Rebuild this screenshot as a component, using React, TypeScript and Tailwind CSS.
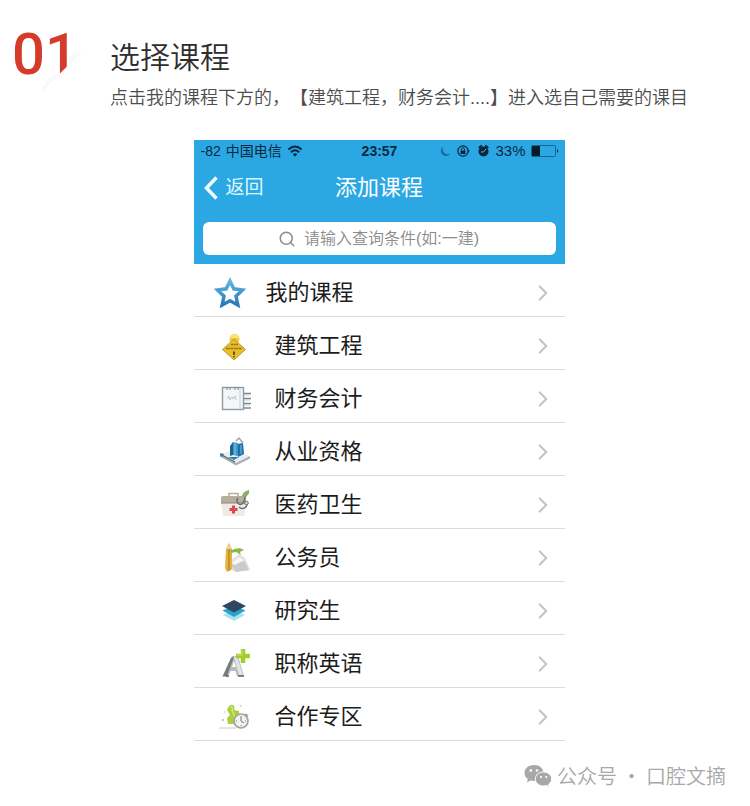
import type { ReactNode } from "react";
import clsx from "clsx";
import { ChevronRight, Search } from "lucide-react";

const StarIcon = () => (
  <svg viewBox="0 0 34 34" className="h-[34px] w-[34px]" aria-hidden="true">
    <defs>
      <linearGradient id="star" x1="0" y1="0" x2="0" y2="1">
        <stop offset="0" stopColor="#5fb4e2" />
        <stop offset="1" stopColor="#2b78b8" />
      </linearGradient>
    </defs>
    <path
      d="M17 5 20.800 12.800 29.500 14 23 20.200 24.800 29 17 24.800 9.200 29 11 20.200 4.500 14 13.200 12.800Z"
      fill="#fff"
      stroke="url(#star)"
      strokeWidth="3.500"
    />
  </svg>
);

const icons = {
  construction: (
    <>
      <circle cx="16.500" cy="9" r="5" fill="#f0c93c" />
      <path d="M12 8c1-5 8-5 9 0" fill="#fbe27a" />
      <path d="M16 9 27.500 19.500 16 30 4.500 19.500Z" fill="#e8bd25" stroke="#b48d1e" strokeWidth=".8" />
      <path d="M13 14.500h7M8 18.500h16" stroke="#8a6f22" strokeWidth="1.400" strokeDasharray="2 .6" />
      <path d="M16 21.500v3.500M16 26.200v1.300" stroke="#4d3b10" strokeWidth="1.600" />
    </>
  ),
  finance: (
    <>
      <path d="M24 10.500h9M24 15.500h9M24 20.500h9M24 25h9" stroke="#7d8990" strokeWidth="1.600" />
      <path d="M26 12h6M26 17h6M26 22h6" stroke="#c5cbd0" />
      <rect x="4.500" y="4.500" width="21" height="22" fill="#f3f7f9" stroke="#8d9aa2" strokeWidth="1.400" />
      <path d="M22 5v21" stroke="#c4d0d6" />
      <path d="M9 4v3M12 5v2M17 4v3M20 5v2" stroke="#7d8990" />
      <path d="m9 16 2-3 1 4 2-3 1 2 2-3 1 4" fill="none" stroke="#b9c3c9" />
    </>
  ),
  career: (
    <>
      <path d="M2 18 16 14l16 6-14 9z" fill="#e9edf0" />
      <path d="M2 18v2.500L18 29.500 32 22.500V20L18 27z" fill="#a7b1ba" />
      <path d="M2 18 17 26" stroke="#596a78" strokeWidth="1.200" />
      <circle cx="4" cy="19" r="1.800" fill="#4b7594" />
      <path d="m12 10 3-4v13l-3 1z" fill="#1e608e" />
      <path d="m15 6 5 1v13l-5-1z" fill="#3f98cb" />
      <path d="m20 8 5-1 1 11-6 3z" fill="#1d6fa8" />
      <path d="M17 7v12M23 9v9" stroke="#7fc4e6" />
      <path d="m18 5 3-3 4 5" fill="none" stroke="#9aa5ad" strokeWidth="1.500" />
      <path d="M10 21h11l-5 3z" fill="#3a7aa5" />
    </>
  ),
  medical: (
    <>
      <path d="M11 8V4.500h9V8" fill="none" stroke="#b8ab99" strokeWidth="1.500" />
      <rect x="3" y="7" width="25" height="9" rx="2" fill="#b7ac9d" />
      <path d="M3.500 14H27.500L26.500 27H5z" fill="#f0eae6" />
      <path d="M3 14h25" stroke="#8f8374" />
      <path d="M15.500 16.500v8M11.500 20.500h8" stroke="#db4a4b" strokeWidth="3" />
      <path d="M20 9c-3 4 2 9 5 5s1-6 3-7M21 18c3 3 8 1 8-3" fill="none" stroke="#68716f" strokeWidth="1.400" />
      <circle cx="28.500" cy="14" r="1.800" fill="#d3d8d7" stroke="#68716f" />
      <path d="M24 7c1-4 4-5 7-6 1 4-2 7-6 7z" fill="#8dad67" />
    </>
  ),
  civil: (
    <>
      <path d="M11 20 21 12l6 4 5 12-14 2-8-3z" fill="#e0e1e3" />
      <path d="m13 23 13-4 5 9-13 2z" fill="#c9cbce" />
      <path d="m14 21 7-6 5 3-9 5z" fill="#f7f7f8" />
      <path d="M8 7 11 1l3 6v20l-5 3-2-4z" fill="#e4b441" />
      <path d="M11 2v27" stroke="#bd872a" strokeWidth="1.500" />
      <path d="m8 7 3-6 3 6z" fill="#e9d1a0" />
      <path d="M12 9c5-3 10-4 14-1l-4 2 1 3-5-3-5 1z" fill="#8aba4a" />
    </>
  ),
  graduate: (
    <>
      <path d="m5 20 11-5 11 5-11 6z" fill="#a9e2ef" />
      <path d="m4.500 15.500 11.500-5 11.500 5L16 22z" fill="#25a5ce" />
      <path d="M4 11 16 5l12 6-12 6.500z" fill="#304760" />
    </>
  ),
  english: (
    <>
      <path d="M4 29 14 8h6l6 20h-7l-1.500-5h-5L10 29z" fill="#b8babd" />
      <path d="M5 28 13 10l3-1-7 19z" fill="#77797d" />
      <path d="m16 9 3-.5L25 27h-4z" fill="#e3e4e6" />
      <path d="m14 19 2-6 2 6z" fill="#fff" />
      <path d="M8 28h3M20 28h6" stroke="#606166" strokeWidth="1.500" />
      <path d="M25 1v14M18 8h14" stroke="#a5cb2c" strokeWidth="4.500" />
      <path d="M24 2v5h-5" fill="none" stroke="#cbe46c" />
    </>
  ),
  partner: (
    <>
      <path d="M1 27h17" stroke="#dadcd9" strokeWidth="1.500" />
      <path d="M11 5c3-3 7 0 5 4l5 1 1 8-5 5h-7l-1-6 3-3-3-5z" fill="#a9cf3b" />
      <path d="M12 6c2-1 3 1 2 3l3 7" fill="none" stroke="#cfe781" strokeWidth="1.500" />
      <circle cx="5" cy="19" r="1" fill="#b4bc9b" />
      <circle cx="23" cy="5" r="1" fill="#d1dba6" />
      <circle cx="7" cy="11" r=".7" fill="#b4bc9b" />
      <circle cx="23" cy="20" r="7" fill="#f2f2ef" stroke="#a2a49f" strokeWidth="1.700" />
      <path d="M23 15v5l3 2M18 20h1M27 20h1M23 24v1" fill="none" stroke="#74766f" />
      <path d="m27 13 3 2" stroke="#a2a49f" strokeWidth="2" />
    </>
  ),
};

const courses: { name: string; icon: ReactNode }[] = [
  { name: "建筑工程", icon: icons.construction },
  { name: "财务会计", icon: icons.finance },
  { name: "从业资格", icon: icons.career },
  { name: "医药卫生", icon: icons.medical },
  { name: "公务员", icon: icons.civil },
  { name: "研究生", icon: icons.graduate },
  { name: "职称英语", icon: icons.english },
  { name: "合作专区", icon: icons.partner },
];

function CourseRow({ name, icon, featured }: { name: string; icon: ReactNode; featured?: boolean }) {
  return (
    <li className="border-b border-[#dcdcdc]">
      <a
        href="#"
        className={clsx(
          "flex h-[52px] items-center pt-[6px] pr-[9px]",
          featured ? "gap-[19px] pl-[19px]" : "gap-[21px] pl-6",
        )}
      >
        {icon}
        <span className="flex-1 text-[22px] leading-8 text-[#1c1c1c]">{name}</span>
        <ChevronRight className="h-[26px] w-[26px] text-[#c4c4c4]" strokeWidth={2} aria-hidden="true" />
      </a>
    </li>
  );
}

function StatusBar() {
  return (
    <div className="grid h-[22px] grid-cols-[1fr_auto_1fr] items-center pr-[6px] pl-[7px] text-sm leading-5 text-[#07283f]">
      <div className="flex items-center gap-[5px]">
        <span>-82</span>
        <span>中国电信</span>
        <svg viewBox="0 0 16 12" className="h-3 w-4" fill="none" stroke="currentColor" strokeWidth="2" aria-hidden="true">
          <path d="M1.500 4.500c4-4 9-4 13 0M4 7.200c2.500-2.500 5.500-2.500 8 0" />
          <path d="m5.800 9.200 2.200 2.500 2.200-2.500c-1.400-1.200-3-1.200-4.400 0z" fill="currentColor" stroke="none" />
        </svg>
      </div>
      <span className="font-bold">23:57</span>
      <div className="flex items-center justify-end gap-[5px]">
        <svg viewBox="0 0 50 14" className="h-[14px] w-[50px]" fill="none" aria-hidden="true">
          <path d="M3.500 2.500c-2.500 5 2 9.500 7 7-2 3.500-8 3.500-9.500-1C.2 6 1.500 3.500 3.500 2.500z" fill="#1a6e9e" />
          <circle cx="23" cy="7" r="5.200" stroke="currentColor" strokeWidth="1.200" />
          <path d="m27 6.500 1.300 2L30 6.500z" fill="currentColor" />
          <rect x="20.500" y="6.500" width="5" height="3.500" fill="currentColor" />
          <path d="M21.500 6.500V5.300a1.500 1.500 0 0 1 3 0v1.200" stroke="currentColor" />
          <circle cx="43.500" cy="7.500" r="5" fill="currentColor" />
          <path d="m38.800 4 3-2.500M48.200 4l-3-2.500" stroke="currentColor" strokeWidth="2.200" />
          <path d="M43.500 8 46 5M43.500 8H41" stroke="#5ebde9" />
        </svg>
        <span className="text-[15px]">33%</span>
        <svg viewBox="0 0 28 12" className="h-3 w-7" fill="none" aria-hidden="true">
          <rect x=".5" y=".5" width="24" height="11" rx="1" stroke="#16618e" />
          <rect x="1" y="1" width="8" height="10" fill="#051c2b" />
          <path d="M26 4v4l1.500-2z" fill="currentColor" />
        </svg>
      </div>
    </div>
  );
}

function PhoneScreen() {
  return (
    <section className="mx-auto w-full max-w-[371px]">
      <header className="bg-[#2ba8e3] pb-[9px]">
        <StatusBar />
        <div className="grid h-[52px] grid-cols-[1fr_auto_1fr] items-center text-white">
          <button type="button" className="flex items-center gap-2 pl-[10px] text-[19px] leading-7 text-[#dcf8ff]">
            <svg viewBox="0 0 14 24" className="h-6 w-[14px]" fill="none" stroke="#f2fdff" strokeWidth="3.500" aria-hidden="true">
              <path d="M12.500 1.500 2.500 12l10 10.500" />
            </svg>
            返回
          </button>
          <h2 className="text-[22px] leading-8">添加课程</h2>
        </div>
        <label className="mx-[9px] mt-2 flex h-[33px] items-center justify-center gap-2 rounded-md bg-white">
          <Search className="h-[18px] w-[18px] text-[#8c8c8c]" strokeWidth={2} aria-hidden="true" />
          <input
            type="text"
            aria-label="查询条件"
            placeholder="请输入查询条件(如:一建)"
            className="w-[176px] text-base leading-6 font-[350] text-[#444] outline-none placeholder:text-[#8c8c8c]"
          />
        </label>
      </header>
      <ul>
        <CourseRow name="我的课程" icon={<StarIcon />} featured />
        {courses.map((course) => (
          <CourseRow
            key={course.name}
            name={course.name}
            icon={
              <svg viewBox="0 0 36 32" className="h-8 w-9" fill="none" aria-hidden="true">
                {course.icon}
              </svg>
            }
          />
        ))}
      </ul>
    </section>
  );
}

function StepNumber() {
  return (
    <div className="relative w-[98px] shrink-0">
      <span className="font-['Roboto'] text-[58px] leading-[54px] font-medium text-[#d43b2a]">01</span>
      {/* folded paper corner over the lower part of the number */}
      <svg viewBox="0 0 50 58" className="absolute top-[11px] left-[26px] h-[58px] w-[50px]" aria-hidden="true">
        <defs>
          <linearGradient id="fold" gradientUnits="userSpaceOnUse" x1="20" y1="27" x2="28.500" y2="35.500">
            <stop offset="0" stopColor="#e6e6ec" stopOpacity="0" />
            <stop offset="1" stopColor="#dedee6" stopOpacity=".45" />
          </linearGradient>
        </defs>
        <path d="M50 7.500 0 57.500V58h50z" fill="#fff" />
        <path d="M44 13.500 3 54.500 10 40 22 35z" fill="url(#fold)" />
        <path d="M44 13.500 31 26.500V17z" fill="url(#fold)" />
      </svg>
    </div>
  );
}

export default function App() {
  return (
    <main className="bg-white pt-[27px] font-['Liberation_Sans','Noto_Sans_CJK_SC',sans-serif]">
      <div className="flex pl-3">
        <StepNumber />
        <div className="pt-[11px] font-[350]">
          <h1 className="text-[30px] leading-10 text-[#2e2e2e]">选择课程</h1>
          <p className="text-lg leading-10 text-[#4d4d4d] [text-spacing-trim:space-all]">
            点击我的课程下方的，【建筑工程，财务会计....】进入选自己需要的课目
          </p>
        </div>
      </div>
      <div className="pt-[22px] pl-2">
        <PhoneScreen />
      </div>
      <footer className="flex items-center justify-end gap-[5px] pt-5 pr-6 pb-3 text-[#a8a8a8]">
        <svg viewBox="0 0 28 24" className="h-6 w-7" aria-hidden="true">
          <path d="M10 1C4.500 1 .5 4.500.5 9c0 2.500 1.300 4.600 3.300 6L3 18.500l3.500-2c1.100.3 2.300.5 3.500.5 5.500 0 9.500-3.500 9.500-8S15.500 1 10 1z" fill="currentColor" />
          <circle cx="6.800" cy="6.500" r="1.300" fill="#fff" />
          <circle cx="13" cy="6.500" r="1.300" fill="#fff" />
          <path
            d="M19.500 8c-4.600 0-8.200 3-8.200 7s3.600 7 8.200 7c1 0 2-.2 2.900-.5l2.800 1.700-.7-3c1.900-1.300 3.200-3 3.200-5.200 0-4-3.600-7-8.200-7z"
            fill="currentColor"
            stroke="#fff"
          />
          <circle cx="17" cy="13" r="1.100" fill="#fff" />
          <circle cx="22.300" cy="13" r="1.100" fill="#fff" />
        </svg>
        <span className="font-['Noto_Sans_CJK_SC',sans-serif] text-xl leading-[30px] font-[350]">公众号 · 口腔文摘</span>
      </footer>
    </main>
  );
}
